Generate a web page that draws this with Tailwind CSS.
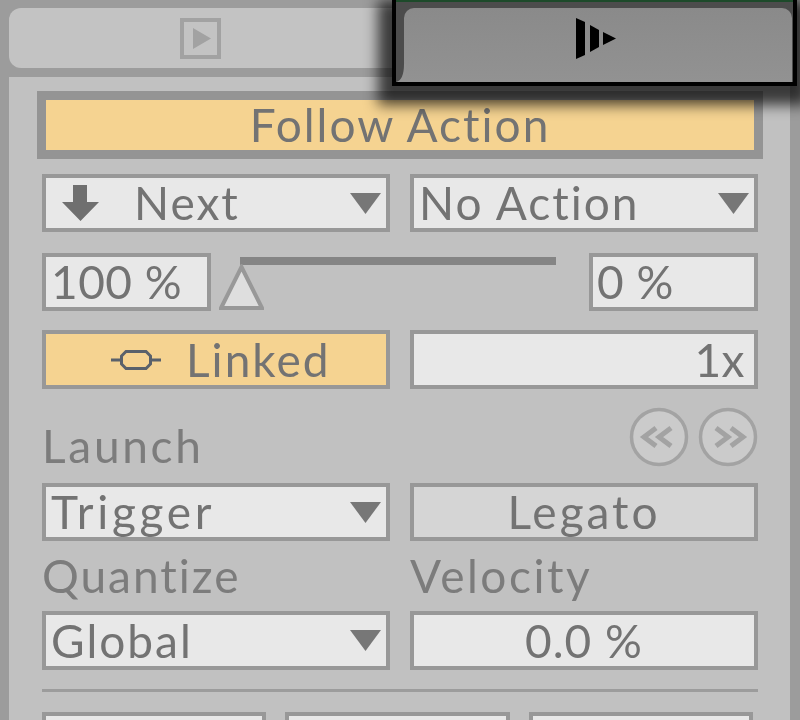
<!doctype html>
<html>

<head>
    <meta charset="UTF-8">
    <script src="https://cdn.jsdelivr.net/npm/@tailwindcss/browser@4"></script>
</head>

<body>
    <div class="relative w-[800px] h-[720px] overflow-hidden bg-[#9c9c9c] font-['Lato',sans-serif] text-[46px] leading-none tracking-[2px] text-[#737373] blur-[0.7px]">
        <!-- tab row -->
        <div class="pt-[8px] pl-[9px]">
            <div class="w-[400px] h-[60px] rounded-[12px] bg-[#c3c3c3] flex justify-center items-center pr-[17px]">
                <svg width="41" height="41" viewBox="0 0 41 41">
                    <rect x="2" y="2" width="37" height="37" fill="none" stroke="#a2a2a2" stroke-width="4" />
                    <polygon points="13,10 31,20.5 13,31" fill="#a2a2a2" />
                </svg>
            </div>
        </div>

        <!-- panel -->
        <div class="ml-[9px] mr-[10px] mt-[9px] h-[643px] bg-[#c1c1c1] pt-[14px] pl-[33px] pr-[32px]">
            <div class="-ml-[5px] -mr-[5px] h-[68px] border-[9px] border-[#949494] bg-[#f5d391] flex items-center justify-center">Follow Action</div>

            <div class="mt-[15px] grid grid-cols-[348px_348px] gap-x-[20px]">
                <div class="h-[58px] border-[4px] border-[#989898] bg-[#e8e8e8] flex items-center pl-[16px] pr-[5px]">
                    <svg width="37" height="36" viewBox="0 0 37 36" class="shrink-0">
                        <polygon points="11,0 25,0 25,17 37,17 18.5,36 0,17 11,17" fill="#6f6f6f" />
                    </svg>
                    <span class="ml-[35px] flex-1">Next</span>
                    <svg width="31" height="21" viewBox="0 0 31 21"><polygon points="0,0 31,0 15.5,21" fill="#777" /></svg>
                </div>
                <div class="h-[58px] border-[4px] border-[#989898] bg-[#e8e8e8] flex items-center pl-[5px] pr-[5px]">
                    <span class="flex-1">No Action</span>
                    <svg width="31" height="21" viewBox="0 0 31 21"><polygon points="0,0 31,0 15.5,21" fill="#777" /></svg>
                </div>
            </div>

            <div class="mt-[21px] flex h-[58px]">
                <div class="w-[169px] h-[58px] border-[4px] border-[#989898] bg-[#e8e8e8] flex items-center pl-[5px] tracking-[0.5px]">100 %</div>
                <div class="flex-1">
                    <div class="ml-[29px] mt-[4px] w-[316px] h-[8px] bg-[#858585]"></div>
                    <svg width="45" height="46" viewBox="0 0 45 46" class="ml-[8px] -mt-[1px]">
                        <polygon points="22.5,3 43,44 2,44" fill="#dedede" stroke="#989898" stroke-width="4" />
                    </svg>
                </div>
                <div class="w-[169px] h-[58px] border-[4px] border-[#989898] bg-[#e8e8e8] flex items-center pl-[4px] tracking-[0.5px]">0 %</div>
            </div>

            <div class="mt-[19px] grid grid-cols-[348px_348px] gap-x-[20px]">
                <div class="h-[59px] border-[4px] border-[#989898] bg-[#f5d391] flex items-center gap-[25px] pl-[65px]">
                    <svg width="50" height="22" viewBox="0 0 50 22" class="shrink-0">
                        <path d="M15 2.5H35L39.5 7V15L35 19.5H15L10.5 15V7Z" fill="none" stroke="#59616b" stroke-width="3" />
                        <path d="M0 11H11M39 11H50" stroke="#59616b" stroke-width="3" />
                    </svg>
                    <span>Linked</span>
                </div>
                <div class="h-[59px] border-[4px] border-[#989898] bg-[#e8e8e8] flex items-center justify-end pr-[9px] tracking-[0.5px]">1x</div>
            </div>

            <div class="mt-[19px] flex justify-between h-[59px] items-end">
                <span class="-mb-[2px] text-[#7c7c7c] tracking-[2.7px]">Launch</span>
                <div class="flex gap-[9px]">
                    <svg width="60" height="60" viewBox="0 0 60 60">
                        <circle cx="30" cy="30" r="27.5" fill="#cbcbcb" stroke="#a3a3a3" stroke-width="3.5" />
                        <path d="M27 21L15 30L27 39M42 21L30 30L42 39" fill="none" stroke="#a3a3a3" stroke-width="5" />
                    </svg>
                    <svg width="60" height="60" viewBox="0 0 60 60">
                        <circle cx="30" cy="30" r="27.5" fill="#cbcbcb" stroke="#a3a3a3" stroke-width="3.5" />
                        <path d="M18 21L30 30L18 39M33 21L45 30L33 39" fill="none" stroke="#a3a3a3" stroke-width="5" />
                    </svg>
                </div>
            </div>

            <div class="mt-[16px] grid grid-cols-[348px_348px] gap-x-[20px]">
                <div class="h-[58px] border-[4px] border-[#989898] bg-[#e8e8e8] flex items-center pl-[5px] pr-[5px]">
                    <span class="flex-1 tracking-[3.7px]">Trigger</span>
                    <svg width="31" height="21" viewBox="0 0 31 21"><polygon points="0,0 31,0 15.5,21" fill="#777" /></svg>
                </div>
                <div class="h-[58px] border-[4px] border-[#989898] bg-[#d5d5d5] flex items-center justify-center tracking-[3px]">Legato</div>

                <div class="h-[70px] flex items-center text-[#7c7c7c]">Quantize</div>
                <div class="h-[70px] flex items-center text-[#7c7c7c] tracking-[2.5px]">Velocity</div>

                <div class="h-[59px] border-[4px] border-[#989898] bg-[#e8e8e8] flex items-center pl-[5px] pr-[5px]">
                    <span class="flex-1">Global</span>
                    <svg width="31" height="21" viewBox="0 0 31 21"><polygon points="0,0 31,0 15.5,21" fill="#777" /></svg>
                </div>
                <div class="h-[59px] border-[4px] border-[#989898] bg-[#e8e8e8] flex items-center justify-center tracking-[1px]">0.0 %</div>
            </div>

            <div class="mt-[19px] h-[3px] bg-[#9c9c9c]"></div>

            <div class="mt-[20px] flex gap-[19px]">
                <div class="w-[224px] h-[40px] border-[4px] border-[#989898] bg-[#e8e8e8]"></div>
                <div class="w-[225px] h-[40px] border-[4px] border-[#989898] bg-[#e8e8e8]"></div>
                <div class="w-[224px] h-[40px] border-[4px] border-[#989898] bg-[#e8e8e8]"></div>
            </div>
        </div>

        <!-- selected tab, its shadow is a blurred box so it falls over the panel -->
        <div class="absolute left-[378px] top-0 w-[430px] h-[105px] bg-black/70 blur-[7px]"></div>
        <div class="absolute left-[392px] top-0 w-[405px] h-[86px] border-x-[4px] border-b-[4px] border-black bg-[#4c4c4c]">
            <div class="h-[2px] bg-[#1d4a2a]"></div>
            <div class="ml-[8px] mr-[1px] mt-[6px] h-[74px] rounded-t-[10px] bg-gradient-to-b from-[#8a8a8a] to-[#929292] flex justify-center pt-[10px] pr-[5px]">
                <svg width="40" height="41" viewBox="0 0 40 41">
                    <polygon points="0,0 9,4 9,37 0,41" fill="#000" />
                    <polygon points="14,7 23,12 23,29 14,34" fill="#000" />
                    <polygon points="27,14 40,20.5 27,27" fill="#000" />
                </svg>
            </div>
            <svg width="10" height="18" viewBox="0 0 10 18" class="absolute left-0 bottom-0">
                <path d="M0 18Q8 16 8 0H10V18Z" fill="#929292" />
            </svg>
        </div>
    </div>
</body>

</html>
